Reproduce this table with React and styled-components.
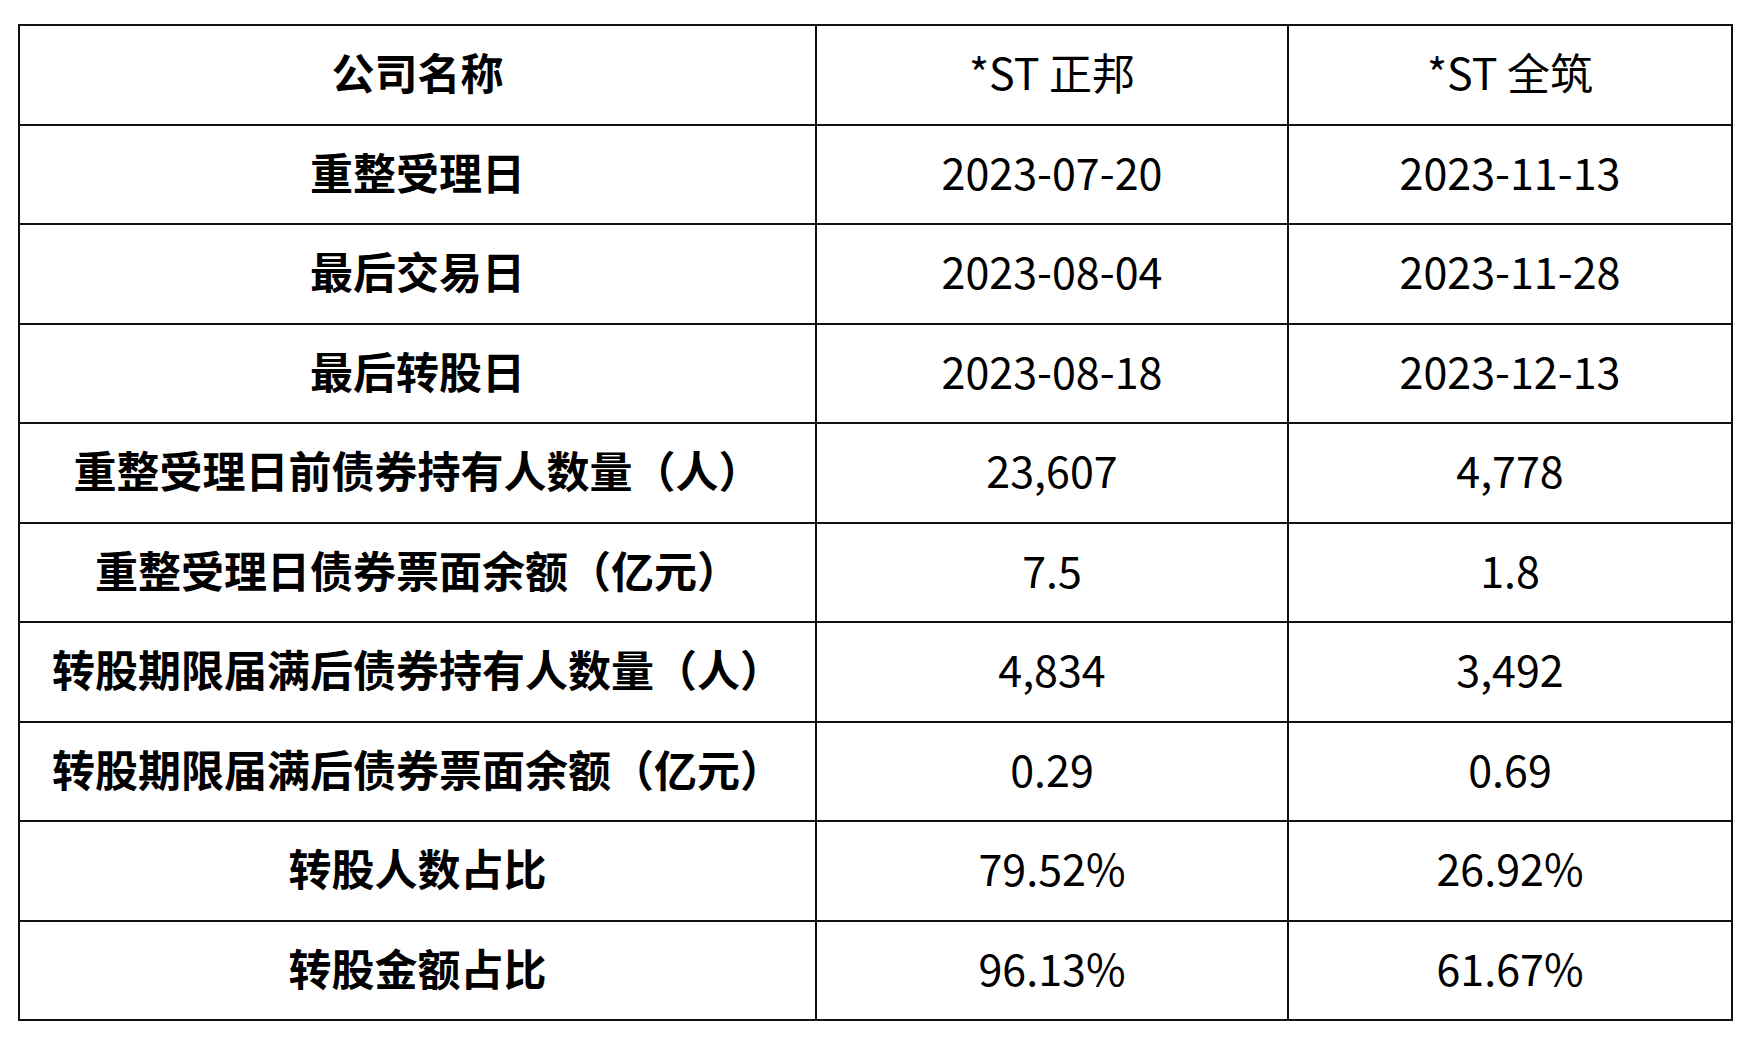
import React from 'react';
import styled, { createGlobalStyle } from 'styled-components';

const GlobalStyle = createGlobalStyle`
  html, body {
    margin: 0;
    padding: 0;
    background: #fff;
  }
  body {
    font-family: "Noto Sans CJK SC", "Noto Sans", sans-serif;
    color: #000;
  }
`;

const Page = styled.div`
  padding: 24px 0 0 18px;
`;

const Table = styled.table`
  width: 1713px;
  border-collapse: collapse;
  table-layout: fixed;
  border: 2px solid #000;
`;

const Row = styled.tr`
  height: 99.5px;
`;

const Cell = styled.td`
  border: 2px solid #111;
  padding: 0 0 6px;
  text-align: center;
  vertical-align: middle;
  white-space: nowrap;
  font-size: 43px;
  line-height: 1;
  font-weight: ${(p) => (p.$label ? 700 : 400)};
`;

const rows = [
  ['公司名称', '*ST 正邦', '*ST 全筑'],
  ['重整受理日', '2023-07-20', '2023-11-13'],
  ['最后交易日', '2023-08-04', '2023-11-28'],
  ['最后转股日', '2023-08-18', '2023-12-13'],
  ['重整受理日前债券持有人数量（人）', '23,607', '4,778'],
  ['重整受理日债券票面余额（亿元）', '7.5', '1.8'],
  ['转股期限届满后债券持有人数量（人）', '4,834', '3,492'],
  ['转股期限届满后债券票面余额（亿元）', '0.29', '0.69'],
  ['转股人数占比', '79.52%', '26.92%'],
  ['转股金额占比', '96.13%', '61.67%'],
];

export default function App() {
  return (
    <Page>
      <GlobalStyle />
      <Table>
        <colgroup>
          <col style={{ width: 797 }} />
          <col style={{ width: 472 }} />
          <col style={{ width: 444 }} />
        </colgroup>
        <tbody>
          {rows.map(([label, a, b]) => (
            <Row key={label}>
              <Cell $label>{label}</Cell>
              <Cell>{a}</Cell>
              <Cell>{b}</Cell>
            </Row>
          ))}
        </tbody>
      </Table>
    </Page>
  );
}
